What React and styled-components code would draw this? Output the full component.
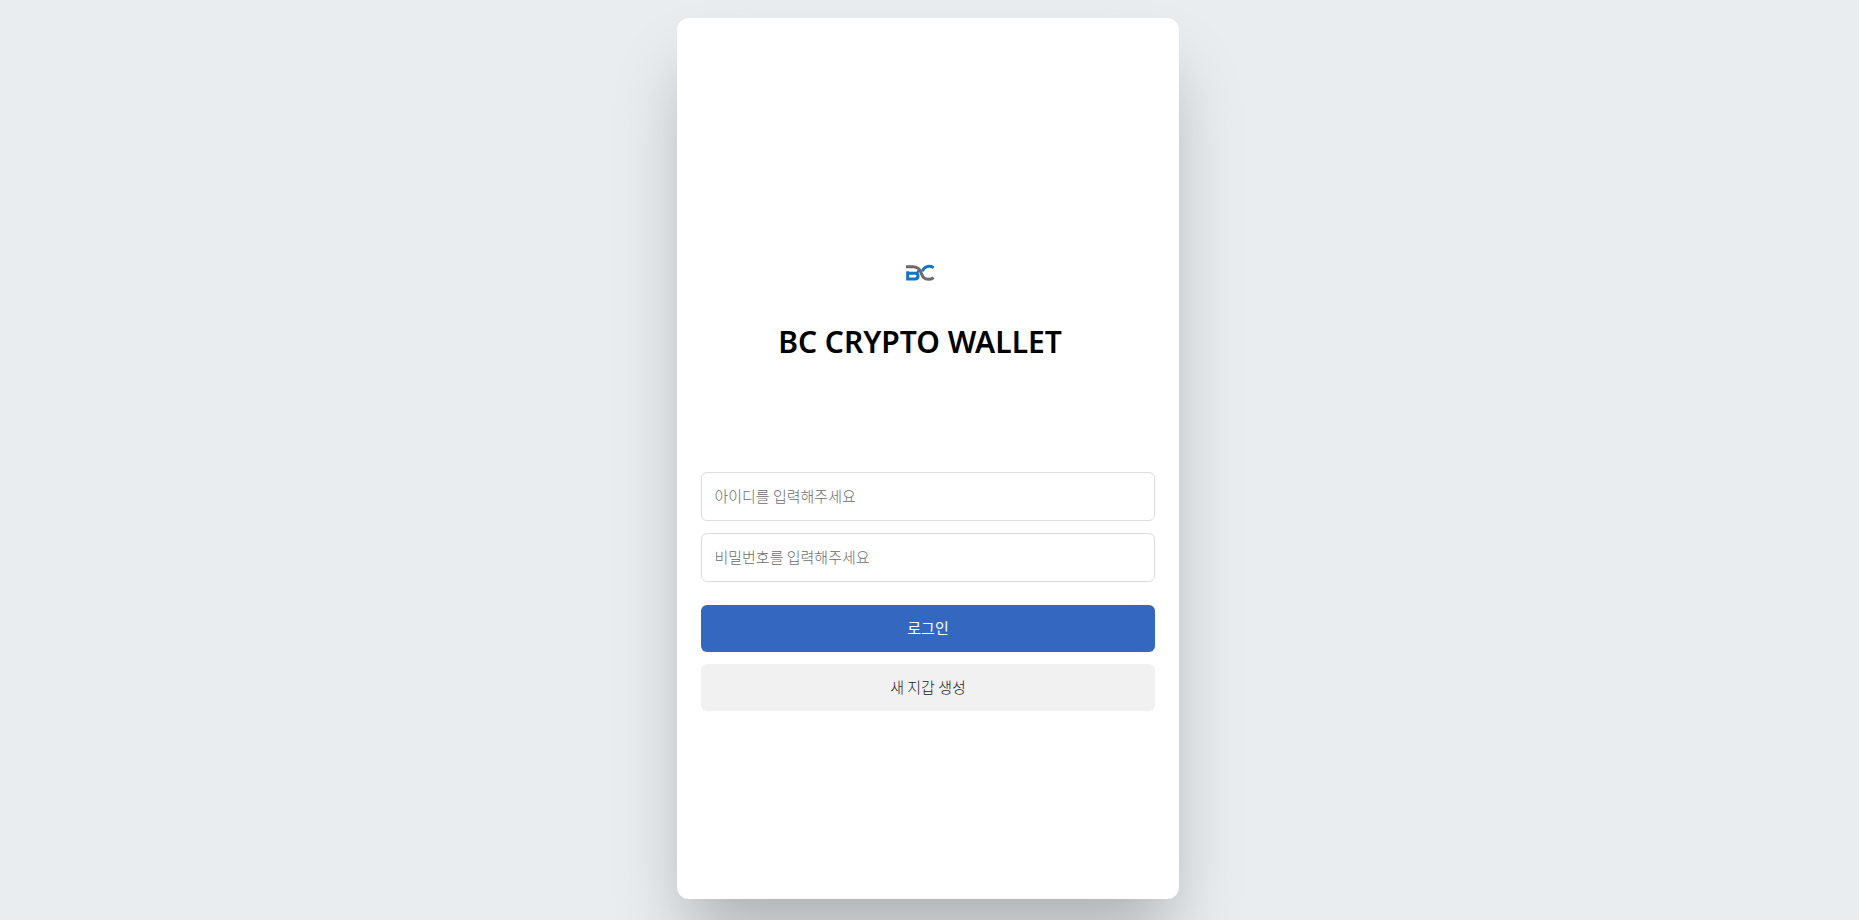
import React, { useState } from 'react'
import styled, { createGlobalStyle } from 'styled-components'

const GlobalStyle = createGlobalStyle`
* {
box-sizing:border-box;
}
body {
margin:0;
background-color:#e9edf0;
font-family:"Noto Sans", "Noto Sans CJK KR", sans-serif;
}
`

const Page = styled.div`
min-height:100vh;
padding:18px 3px 21px 0;
display:flex;
justify-content:center;
overflow:hidden;
`

const Card = styled.main`
width:27%;
min-width:320px;
padding:0 24px;
display:flex;
flex-direction:column;
background-color:white;
border-radius:12px;
box-shadow:0 44px 70px -10px rgba(0, 0, 0, 0.26);
`

const Header = styled.header`
padding:246px 16px 0 0;
display:flex;
flex-direction:column;
align-items:center;
`

const Logo = styled.svg`
width:30px;
height:18px;
`

const Title = styled.h1`
margin:40px 0 0;
font-size:30px;
line-height:40px;
font-weight:600;
color:black;
white-space:nowrap;
`

const Form = styled.form`
padding:110px 0 24px;
display:flex;
flex-direction:column;
gap:12px;
`

const Input = styled.input`
width:100%;
height:49px;
padding:0 12px 2px;
border:1px solid #dddddd;
border-radius:6px;
background-color:white;
font-family:"Noto Sans CJK KR", sans-serif;
font-size:15px;
font-weight:300;
color:#333333;

&::placeholder {
color:#6c6c6c;
opacity:1;
}
`

const Buttons = styled.div`
padding-top:11px;
display:flex;
flex-direction:column;
gap:12px;
`

const Button = styled.button`
width:100%;
height:47px;
padding:0 0 2px;
border:none;
border-radius:6px;
background-color:${({ $primary }) => ($primary ? '#3468c0' : '#f1f1f1')};
color:${({ $primary }) => ($primary ? 'white' : '#222222')};
font-family:"Noto Sans CJK KR", sans-serif;
font-size:15px;
font-weight:${({ $primary }) => ($primary ? 400 : 300)};
cursor:pointer;
`

export default function App() {
    const [id, setId] = useState('')
    const [password, setPassword] = useState('')

    return (
        <>
            <GlobalStyle />
            <Page>
                <Card>
                    <Header>
                        <Logo viewBox="0 0 90 54" fill="none" role="img" aria-label="BC">
                            <path d="M8 22V45H30C42 45 42 28 31 28H8" stroke="#1276c4" strokeWidth="9" />
                            <path d="M31 28C37 27 40 24 41 19" stroke="#1276c4" strokeWidth="7" />
                            <path d="M52 22C57 6 73 4 86 11" stroke="#1276c4" strokeWidth="9" />
                            <path d="M3 8H24C56 8 42 46 70 46C77 46 81 44 86 41" stroke="#6d6a69" strokeWidth="9" />
                        </Logo>
                        <Title>BC CRYPTO WALLET</Title>
                    </Header>
                    <Form onSubmit={(e) => e.preventDefault()}>
                        <Input
                            type="text"
                            aria-label="아이디"
                            placeholder="아이디를 입력해주세요"
                            value={id}
                            onChange={(e) => setId(e.target.value)}
                        />
                        <Input
                            type="password"
                            aria-label="비밀번호"
                            placeholder="비밀번호를 입력해주세요"
                            value={password}
                            onChange={(e) => setPassword(e.target.value)}
                        />
                        <Buttons>
                            <Button type="submit" $primary>로그인</Button>
                            <Button type="button">새 지갑 생성</Button>
                        </Buttons>
                    </Form>
                </Card>
            </Page>
        </>
    )
}
